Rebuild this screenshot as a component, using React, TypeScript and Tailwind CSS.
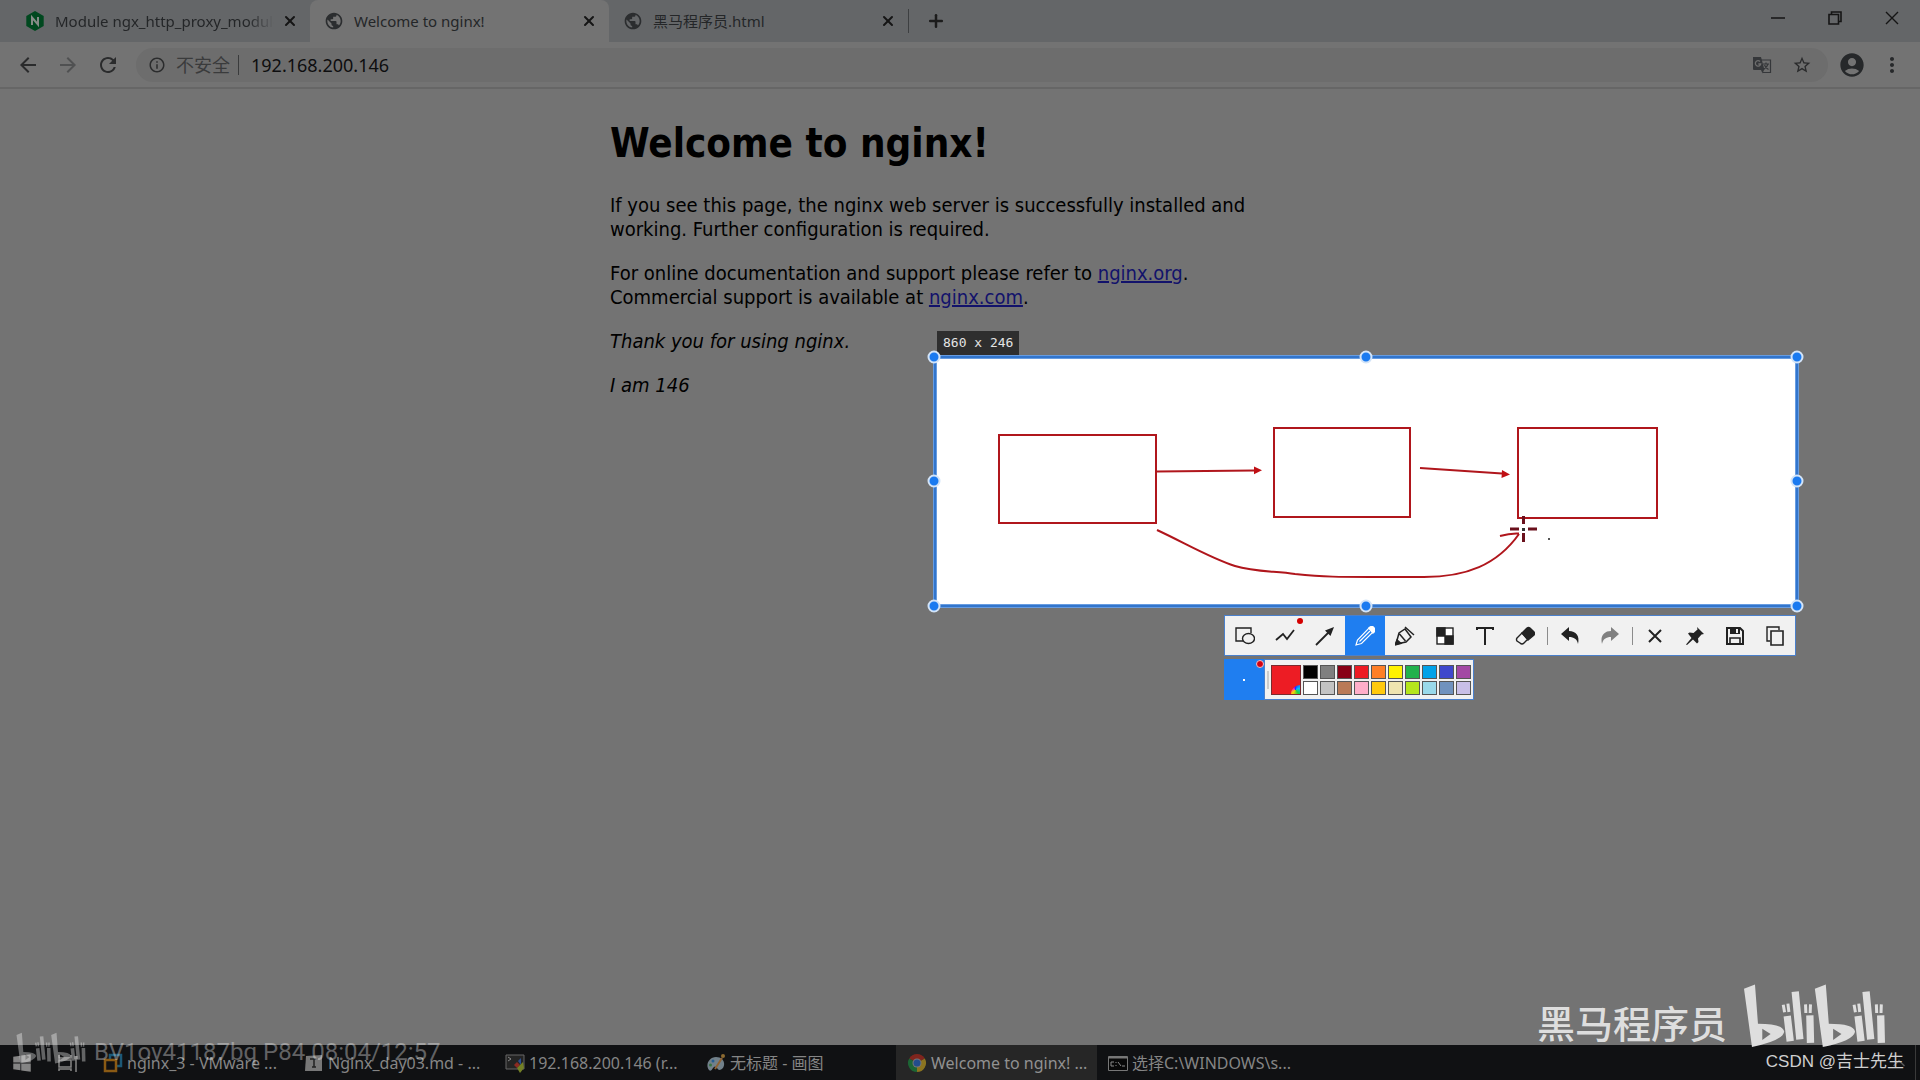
import { FaWindows } from 'react-icons/fa'
import {
  MdAccountCircle,
  MdArrowBack,
  MdArrowForward,
  MdInfoOutline,
  MdMoreVert,
  MdPublic,
  MdRefresh,
  MdStarBorder,
} from 'react-icons/md'
import { ChevronUp, Plus, X } from 'lucide-react'
import type { ReactNode } from 'react'

const paletteTop = ['#000000', '#7f7f7f', '#880015', '#ed1c24', '#ff7f27', '#fff200', '#22b14c', '#00a2e8', '#3f48cc', '#a349a4']
const paletteBottom = ['#ffffff', '#c3c3c3', '#b97a57', '#ffaec9', '#ffc90e', '#efe4b0', '#b5e61d', '#99d9ea', '#7092be', '#c8bfe7']

const handles = [
  [934, 357], [1366, 357], [1797, 357],
  [934, 481], [1797, 481],
  [934, 606], [1366, 606], [1797, 606],
]

function NginxIcon() {
  return (
    <svg viewBox="0 0 20 20" className="w-5 h-5">
      <path d="M10 0l8.7 5v10L10 20l-8.7-5V5z" fill="#00481f" />
      <path d="M7 14V6.5L13 13.5V6" fill="none" stroke="#858b87" strokeWidth="2" />
    </svg>
  )
}

function TranslateIcon() {
  return (
    <svg viewBox="0 0 20 20" className="w-5 h-5" fill="none">
      <path d="M9 5h9.500v12.500H11" stroke="currentColor" strokeWidth="1.200" />
      <path d="M11 9h6M14 7.500V9M12 14q3-1.500 4-5M12.500 10q1 3 4 4.500" stroke="currentColor" strokeWidth="1.200" />
      <path d="M1 2h8l3.500 13H2q-1 0-1-1z" fill="currentColor" />
      <path d="M9 15h3l-1.500 3.500z" fill="currentColor" />
      <path d="M8 6.500a2.700 2.700 0 1 0 .700 2.500H6.300" stroke="#6d6d6d" strokeWidth="1.300" />
    </svg>
  )
}

function Tab({ title, icon, active = false, fade = false }: { title: string; icon: ReactNode; active?: boolean; fade?: boolean }) {
  return (
    <div className={`flex w-[299px] h-full items-center pl-[14px] pr-3 ${active ? 'bg-[#737373] rounded-t-lg' : ''}`}>
      <button role="tab" aria-selected={active} className="flex flex-1 min-w-0 items-center gap-[10px] text-left">
        <span className="shrink-0">{icon}</span>
        <span className={`flex-1 whitespace-nowrap overflow-hidden text-[15px] text-[#242628] ${fade ? '[mask-image:linear-gradient(to_right,black_88%,transparent)]' : ''}`}>
          {title}
        </span>
      </button>
      <button aria-label="Close tab" className="flex w-4 h-4 ml-2 items-center justify-center text-[#151515]">
        <X className="w-4 h-4" strokeWidth={3} />
      </button>
    </div>
  )
}

function TabStrip() {
  return (
    <div className="flex h-[42px] bg-[#646668]">
      <div role="tablist" className="flex pl-[11px]">
        <Tab title="Module ngx_http_proxy_module" icon={<NginxIcon />} fade />
        <Tab title="Welcome to nginx!" icon={<MdPublic className="w-5 h-5 text-[#2b2d2f]" />} active />
        <Tab title="黑马程序员.html" icon={<MdPublic className="w-5 h-5 text-[#2b2d2f]" />} />
      </div>
      <div className="w-px h-6 my-auto bg-[#3d3f41]" />
      <button aria-label="New tab" className="flex w-[53px] items-center justify-center text-[#1c1c1c]">
        <Plus className="w-5 h-5" strokeWidth={3} />
      </button>
      <div className="flex h-9 ml-auto text-[#151515]">
        <button aria-label="Minimize" className="flex w-[57px] items-center justify-center">
          <svg viewBox="0 0 14 14" className="w-[14px] h-[14px]"><path d="M0 7h14" stroke="currentColor" strokeWidth="1.5" /></svg>
        </button>
        <button aria-label="Restore" className="flex w-[57px] items-center justify-center">
          <svg viewBox="0 0 14 14" className="w-[14px] h-[14px]" fill="none" stroke="currentColor" strokeWidth="1.6">
            <path d="M1 3.5h9.5V13H1zM3.5 3V1H13v9.5h-2" />
          </svg>
        </button>
        <button aria-label="Close" className="flex w-[57px] items-center justify-center">
          <svg viewBox="0 0 14 14" className="w-[14px] h-[14px]"><path d="M1 1l12 12M13 1L1 13" stroke="currentColor" strokeWidth="1.4" /></svg>
        </button>
      </div>
    </div>
  )
}

function AddressBar() {
  return (
    <div className="flex h-[47px] items-center pl-4 pr-4 bg-[#737373] border-b-2 border-[#666666]">
      <button aria-label="Back" className="w-10 text-[#2a2b2c]"><MdArrowBack className="w-6 h-6" /></button>
      <button aria-label="Forward" className="w-10 text-[#505152]"><MdArrowForward className="w-6 h-6" /></button>
      <button aria-label="Reload" className="w-10 text-[#2a2b2c]"><MdRefresh className="w-6 h-6" /></button>
      <div className="flex flex-1 h-[34px] items-center pl-3 pr-4 rounded-full bg-[#6d6d6d]">
        <MdInfoOutline className="w-[18px] h-[18px] text-[#2b2c2d]" />
        <span className="ml-[10px] text-lg text-[#3a3b3c]">不安全</span>
        <span className="w-px h-5 mx-2 bg-[#3a3b3c]" />
        <input aria-label="Address" defaultValue="192.168.200.146" className="flex-1 ml-1 bg-transparent outline-none text-lg text-[#0e0e0f]" />
        <button aria-label="Translate" className="w-10 text-[#35373a]"><TranslateIcon /></button>
        <button aria-label="Bookmark" className="w-5 text-[#2a2b2c]"><MdStarBorder className="w-5 h-5" /></button>
      </div>
      <button aria-label="Profile" className="ml-[10px] text-[#26282a]"><MdAccountCircle className="w-7 h-7" /></button>
      <button aria-label="Menu" className="ml-[14px] text-[#26282a]"><MdMoreVert className="w-6 h-6" /></button>
    </div>
  )
}

function WelcomePage() {
  return (
    <main className="flex-1 pt-8 bg-[#737373] text-black font-['DejaVu_Sans_Condensed','DejaVu_Sans',sans-serif]">
      <div className="w-[700px] mx-auto">
        <h1 className="text-[40px] leading-[44px] font-bold">Welcome to nginx!</h1>
        <p className="mt-7 text-xl leading-6">
          If you see this page, the nginx web server is successfully installed and
          <br />
          working. Further configuration is required.
        </p>
        <p className="mt-5 text-xl leading-6">
          For online documentation and support please refer to{' '}
          <a href="http://nginx.org/" className="text-[#12126b] underline">nginx.org</a>.
          <br />
          Commercial support is available at{' '}
          <a href="http://nginx.com/" className="text-[#12126b] underline">nginx.com</a>.
        </p>
        <p className="mt-5 text-xl leading-6 italic">Thank you for using nginx.</p>
        <p className="mt-5 text-xl leading-6 italic">I am 146</p>
      </div>
    </main>
  )
}

function Selection() {
  return (
    <>
      <div className="absolute left-[937px] top-[331px] h-6 px-[6px] bg-[#2e2e2e] text-[#e4e4e4] text-[13px] leading-6 font-['DejaVu_Sans_Mono',monospace] whitespace-pre">
        860 x 246
      </div>
      <svg viewBox="924 346 884 272" className="absolute left-[924px] top-[346px] w-[884px] h-[272px]" fill="none">
        <rect x="935" y="357" width="862" height="249" fill="#ffffff" stroke="#9cc4f5" strokeWidth="4" />
        <rect x="935" y="357" width="862" height="249" stroke="#3275cc" strokeWidth="3" />
        <g stroke="#b0161c" strokeWidth="2">
          <rect x="999" y="435" width="157" height="88" />
          <rect x="1274" y="428" width="136" height="89" />
          <rect x="1518" y="428" width="139" height="90" />
          <path d="M1157 471.500L1254 470.500M1420 468L1502 473.500" />
          <path d="M1157 530C1185 543 1210 558 1235 566C1255 572 1275 571 1295 574C1325 577 1340 577 1370 577L1424 577C1466 577 1497 565 1519 534M1500 536Q1510 533 1519 533.500" />
        </g>
        <path d="M1254 466.500l8 3.800-8 4zM1502 470l8 4.600-8.500 3.500z" fill="#c00f14" />
        <path d="M1510 529h9M1528 529h9M1523.500 516v8M1523.500 533v9" stroke="#6a101c" strokeWidth="3" />
        <rect x="1522" y="528" width="3" height="3" fill="#333333" />
        <rect x="1548" y="538" width="2" height="2" fill="#555555" />
        {handles.map(([x, y]) => (
          <circle key={`${x}-${y}`} cx={x} cy={y} r="5.500" fill="#1a7af0" stroke="#d3e4f8" strokeWidth="2" />
        ))}
      </svg>
    </>
  )
}

function ToolIcon({ children }: { children: ReactNode }) {
  return (
    <svg viewBox="0 0 20 20" className="w-5 h-5" fill="none" stroke="currentColor" strokeWidth="1.4">
      {children}
    </svg>
  )
}

const drawTools: { label: string; icon: ReactNode; active?: boolean; dot?: boolean }[] = [
  { label: 'Shape', icon: <ToolIcon><path d="M8 15H1V2h15v5" /><ellipse cx="13.500" cy="12.500" rx="6" ry="5" /></ToolIcon> },
  { label: 'Polyline', dot: true, icon: <ToolIcon><path d="M1 14l7-6 4 5 7-9" strokeWidth="1.8" /></ToolIcon> },
  { label: 'Arrow', icon: <ToolIcon><path d="M1 19L14 6" strokeWidth="1.8" /><path d="M19 1l-3.500 9-5.500-5.500z" fill="currentColor" stroke="none" /></ToolIcon> },
  { label: 'Pencil', active: true, icon: <ToolIcon><path d="M1 19l1.500-5L14 2l4 4L6.500 17.500zM4.500 15.500L15 5" strokeWidth="1.200" /><path d="M14 2q3-3 5 0t-1 5z" fill="currentColor" /></ToolIcon> },
  { label: 'Marker', icon: <ToolIcon><path d="M1 18l3-11 6-4 6 8-5 5zM10 1l9 8M4.500 8l6 7" strokeWidth="1.500" /><path d="M0 19l2-5 4 3.500z" fill="currentColor" /></ToolIcon> },
  { label: 'Mosaic', icon: <ToolIcon><rect x="2" y="2" width="16" height="16" fill="#ffffff" /><path d="M2 2h8v8H2zM10 10h8v8h-8z" fill="currentColor" /></ToolIcon> },
  { label: 'Text', icon: <ToolIcon><path d="M2 4V2h16v2M10 2v17" strokeWidth="2" /></ToolIcon> },
  { label: 'Eraser', icon: <ToolIcon><path d="M2 12l5-5 6 6-4 4q-2 2-4 0l-3-2q-1-1.500 0-3z" /><path d="M7 7l5-5q1.500-1 3 0l4 4q1 1.500 0 3l-6 5z" fill="currentColor" /></ToolIcon> },
]

const endTools = [
  { label: 'Cancel', icon: <ToolIcon><path d="M4 4l12 12M16 4L4 16" strokeWidth="2" /></ToolIcon> },
  { label: 'Pin', icon: <ToolIcon><path d="M12 1l7 7-2.500.500-3.500 4 .500 3.500-1.500 1.500-4-4L2 19l-1-.500L6.500 12 3 7.500 4.500 6.500l4 .500 4-3.500z" fill="currentColor" stroke="none" /></ToolIcon> },
  { label: 'Save', icon: <ToolIcon><path d="M2 2h13l3 3v13H2z" strokeWidth="2" /><path d="M5 2h10v6H5z" fill="currentColor" stroke="none" /><path d="M11 3h2v4h-2z" fill="#f1f1f1" stroke="none" /><path d="M5 18v-6h10v6" strokeWidth="1.600" /></ToolIcon> },
  { label: 'Copy', icon: <ToolIcon><path d="M5 15H2V1h12v3" /><path d="M6 5h12v14H6z" strokeWidth="1.600" /></ToolIcon> },
]

function ToolButton({ label, icon, active, dot }: { label: string; icon: ReactNode; active?: boolean; dot?: boolean }) {
  return (
    <button aria-label={label} className={`relative flex w-10 items-center justify-center ${active ? 'bg-[#1f7ef0] text-white' : 'text-[#222222]'}`}>
      {icon}
      {dot && <span className="absolute right-[2px] top-[2px] w-[6px] h-[6px] rounded-full bg-[#d40000]" />}
    </button>
  )
}

function UndoArrow() {
  return <ToolIcon><path d="M1 8l8-7v4c7 0 11 5 9 13-1-5-4-7-9-7v4z" fill="currentColor" stroke="none" /></ToolIcon>
}

function AnnotateToolbar() {
  return (
    <div className="absolute left-[1224px] top-[615px] flex flex-col items-start gap-[3px]">
      <div className="flex h-[41px] bg-[#f1f1f1] border border-[#4a80cc]">
        {drawTools.map(tool => <ToolButton key={tool.label} {...tool} />)}
        <span className="w-px h-[18px] mx-[2px] my-auto bg-[#8c8c8c]" />
        <ToolButton label="Undo" icon={<UndoArrow />} />
        <button aria-label="Redo" disabled className="flex w-10 items-center justify-center text-[#808080] -scale-x-100">
          <UndoArrow />
        </button>
        <span className="w-px h-[18px] mx-[2px] my-auto bg-[#8c8c8c]" />
        {endTools.map(tool => <ToolButton key={tool.label} {...tool} />)}
      </div>
      <div className="flex h-[41px]">
        <button aria-label="Brush size" className="relative flex w-10 items-center justify-center bg-[#1f7ef0]">
          <span className="w-[2px] h-[2px] bg-white" />
          <span className="absolute right-0 top-px w-[8px] h-[8px] rounded-full border border-[#f1c0c8] bg-[#d40010]" />
        </button>
        <div className="flex items-center gap-[2px] pl-[2px] pr-[2px] bg-[#f1f1f1] border border-[#4a80cc]">
          <span className="w-[2px] h-[18px] bg-[#cccccc]" />
          <button aria-label="Current colour" className="relative w-[30px] h-[30px] bg-[#ed1c24] border border-[#7a2a2e]">
            <span className="absolute right-0 bottom-0 w-[9px] h-[9px] rounded-tl-full bg-[conic-gradient(#2030ff,#00c0ff,#20d040,#ffd000,#ff20c0,#2030ff)]" />
          </button>
          <div className="grid grid-cols-10 gap-[2px]">
            {[...paletteTop, ...paletteBottom].map(color => (
              <button key={color} aria-label={color} className="w-[15px] h-[14px] border border-[#555555]" style={{ backgroundColor: color }} />
            ))}
          </div>
        </div>
      </div>
    </div>
  )
}

const tasks: { title: string; icon: ReactNode; active?: boolean }[] = [
  {
    title: 'nginx_3 - VMware ...',
    icon: <svg viewBox="0 0 20 20" className="w-5 h-5" fill="none" strokeWidth="2.500"><path d="M7 8V2h11v11h-5" stroke="#1c5876" /><path d="M2 7h11v11H2z" stroke="#8a5a14" /></svg>,
  },
  {
    title: 'Nginx_day03.md - ...',
    icon: <svg viewBox="0 0 20 20" className="w-5 h-5"><path d="M2 3l16-1v16H1z" fill="#777777" /><path d="M6 6h8M10 6v8M8 14h4" stroke="#222222" strokeWidth="1.500" /></svg>,
  },
  {
    title: '192.168.200.146 (r...',
    icon: <svg viewBox="0 0 20 20" className="w-5 h-5"><path d="M1 2h18v14H1z" fill="#242424" stroke="#666666" /><path d="M3 4l3 2-3 2" stroke="#888888" fill="none" /><path d="M9 12l3-3 3 3-3 3z" fill="#8c2a22" /><path d="M13 8l3-3v7z" fill="#2a4f93" /><path d="M12 15l6-6 1 6-4 5z" fill="#738026" /></svg>,
  },
  {
    title: '无标题 - 画图',
    icon: <svg viewBox="0 0 20 20" className="w-5 h-5"><path d="M10 4C3 4-1 12 3 17q2 2 4-2 2-3 4 0 2 4 6 0C20 10 17 4 10 4z" fill="#71808a" /><circle cx="7" cy="8" r="1.500" fill="#255d91" /><circle cx="4.500" cy="12" r="1.500" fill="#367442" /><path d="M9 16L16 5" stroke="#8f6334" strokeWidth="2" /><circle cx="17" cy="3" r="2" fill="#8c6a31" /></svg>,
  },
  {
    title: 'Welcome to nginx! ...',
    active: true,
    icon: <svg viewBox="0 0 20 20" className="w-5 h-5"><path d="M10 10L2.200 5.500A9 9 0 0 1 17.800 5.500z" fill="#80251d" /><path d="M10 10L17.800 5.500A9 9 0 0 1 10 19z" fill="#8b7420" /><path d="M10 10v9A9 9 0 0 1 2.200 5.500z" fill="#1c6534" /><circle cx="10" cy="10" r="4.500" fill="#777777" /><circle cx="10" cy="10" r="3.500" fill="#234d8c" /></svg>,
  },
  {
    title: '选择C:\\WINDOWS\\s...',
    icon: <svg viewBox="0 0 20 20" className="w-5 h-5"><path d="M.500 3.500h19v14H.500z" fill="#080808" stroke="#777777" /><path d="M1 4.500h18" stroke="#777777" strokeWidth="2" /><path d="M6 9H3v4h3M8 9v1M8 12v1M10 9l3 4M14 13h3" stroke="#8a8a8a" fill="none" /></svg>,
  },
]

function Taskbar() {
  return (
    <footer className="flex h-[35px] bg-[#101113] text-[#858585]">
      <button aria-label="Start" className="flex w-11 items-center justify-center"><FaWindows className="w-5 h-5" /></button>
      <button aria-label="Task view" className="flex w-12 items-center justify-center">
        <svg viewBox="0 0 22 18" className="w-[22px] h-[18px]" fill="none" stroke="currentColor" strokeWidth="1.500">
          <path d="M2 1v3h12V1M2 6h12v7H2zM2 17v-2h12v2M19 5v13" /><path d="M17.500 2h3v3h-3z" fill="currentColor" stroke="none" />
        </svg>
      </button>
      {tasks.map(task => (
        <button key={task.title} className={`flex w-[201px] items-center gap-1 pl-[11px] text-base whitespace-nowrap ${task.active ? 'bg-[#262626] text-[#919191]' : ''}`}>
          {task.icon}
          {task.title}
        </button>
      ))}
      <div className="flex items-center ml-auto pr-1">
        <ChevronUp className="w-5 h-5 mr-[6px] text-[#555555]" />
        <span className="w-px h-full bg-[#3a3a3a]" />
      </div>
    </footer>
  )
}

function BiliMark({ className }: { className: string }) {
  return (
    <svg viewBox="730 68 430 195" className={className} fill="currentColor" stroke="currentColor" role="img" aria-label="bilibili">
      {[0, 213].map(shift => (
        <g key={shift} transform={`translate(${shift} 0)`}>
          <path fillRule="evenodd" stroke="none" d="M733 85L766 72L775 190Q850 190 854 214Q848 242 757 260zM788 205V239L813 221z" />
          <path fill="none" strokeWidth="22" d="M863 167L872 243M887 94L901 237M931 165L933 248" />
          <path fill="none" strokeWidth="9" d="M851 133L855 156M865 130L868 155M918 132L919 158M933 132L932 158" />
        </g>
      ))}
    </svg>
  )
}

function Watermarks() {
  return (
    <div className="pointer-events-none">
      <div className="absolute left-4 bottom-[16px] flex items-center gap-2 text-white/35">
        <BiliMark className="w-[70px] h-8" />
        <span className="pt-2 text-2xl leading-6 font-[Roboto,sans-serif]">BV1ov41187bq P84 08:04/12:57</span>
      </div>
      <div className="absolute right-[34px] bottom-[32px] flex items-end gap-4 text-[#dedede]">
        <span className="text-[38px] leading-[52px] font-medium font-['Noto_Sans_CJK_SC',sans-serif]">黑马程序员</span>
        <BiliMark className="w-[143px] h-[65px]" />
      </div>
      <span className="absolute right-4 bottom-[6px] text-[17px] leading-6 text-[#cfcfcf] font-['Liberation_Sans','Noto_Sans_CJK_SC',sans-serif]">CSDN @吉士先生</span>
    </div>
  )
}

export default function App() {
  return (
    <div className="relative flex flex-col min-h-screen overflow-hidden font-['Noto_Sans','Noto_Sans_CJK_SC',sans-serif]">
      <TabStrip />
      <AddressBar />
      <WelcomePage />
      <Taskbar />
      <Selection />
      <AnnotateToolbar />
      <Watermarks />
    </div>
  )
}
